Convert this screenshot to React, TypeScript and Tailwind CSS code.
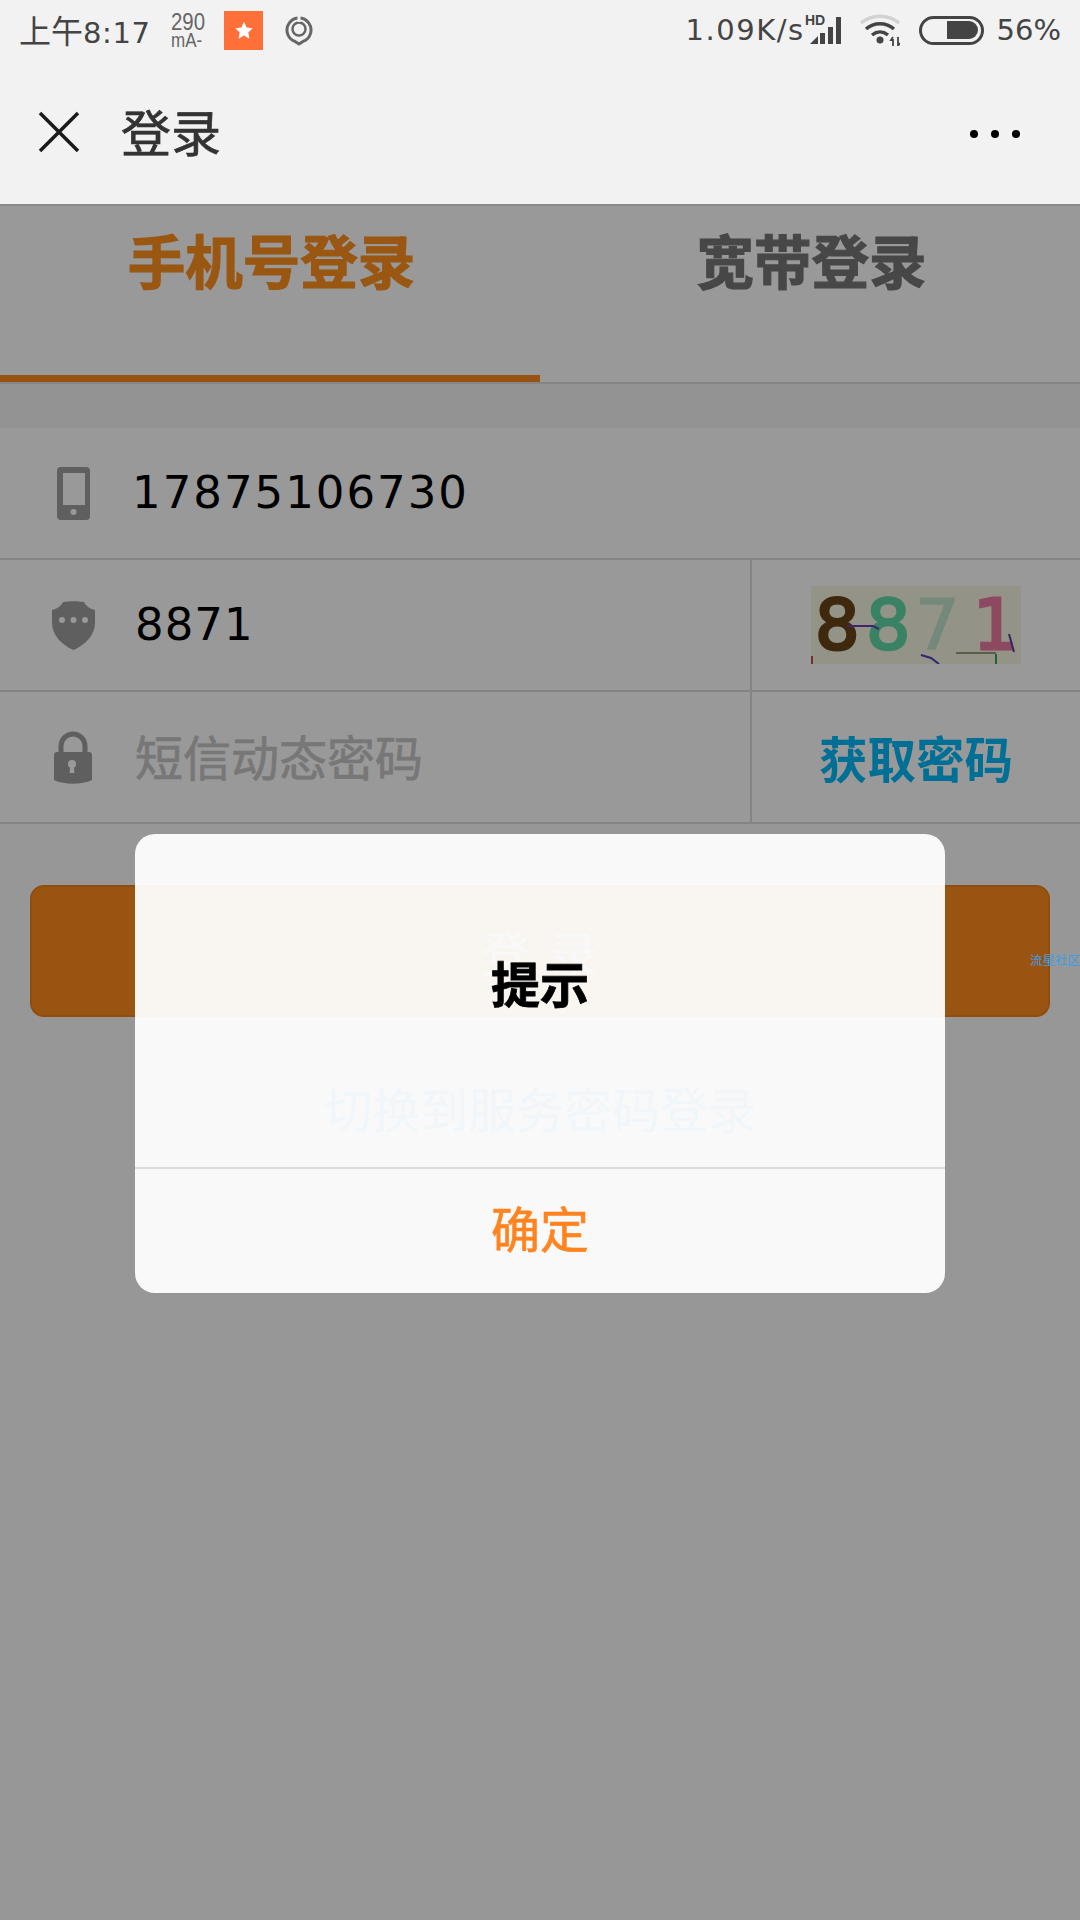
/* Status bar + title bar sit above the dialog overlay */
function StatusBar() {
  return (
    <div className="flex h-[60px] items-center justify-between pl-[19px] pr-[19px] text-[#444]">
      <div className="flex items-center">
        <span className="w-[132px] whitespace-nowrap text-[29px] leading-none tracking-[0.6px] font-['DejaVu_Sans','Noto_Sans_CJK_SC',sans-serif]">
          <span className="text-[32px] tracking-normal font-['Noto_Sans_CJK_SC',sans-serif]">上午</span>8:17
        </span>
        <div className="ml-[20px] flex w-[36px] flex-col font-['Liberation_Sans',sans-serif] text-[#666]">
          <span className="origin-left scale-x-[.85] text-[24px] leading-[20px]">290</span>
          <span className="origin-left scale-x-[.85] text-[20px] leading-[16px]">mA-</span>
        </div>
        <div className="ml-[17px] flex h-[39px] w-[39px] items-center justify-center bg-[#ff7038]">
          <svg width="20" height="19" viewBox="0 0 24 24" fill="#fff">
            <path d="M12 1l3.400 7.200 7.600 1-5.600 5.300 1.500 7.800L12 18.400l-6.900 3.900 1.500-7.800L1 9.200l7.600-1z" />
          </svg>
        </div>
        <svg className="ml-[22px]" width="28" height="32" viewBox="0 0 28 32" fill="none" stroke="#666">
          <path d="M14 30l-4-2.600A12 12 0 1 1 18 27.400z" strokeWidth="3" strokeLinejoin="round" />
          <circle cx="14" cy="15" r="6.500" strokeWidth="2.500" />
          <path d="M14 2v6" stroke="#f2f2f2" strokeWidth="3" />
        </svg>
      </div>
      <div className="flex items-center">
        <span className="text-[29px] leading-none tracking-[1.5px] font-['DejaVu_Sans',sans-serif]">1.09K/s</span>
        <svg width="36" height="32" viewBox="0 0 36 32" fill="#444" className="-mt-[2px]">
          <text x="0" y="12" fontSize="14" fontWeight="700" fontFamily="Liberation Sans">HD</text>
          <path d="M5 31l8-8v8zM15 20h5v11h-5zM23 14h5v17h-5zM31 4h5v27h-5z" />
        </svg>
        <svg className="ml-[19px]" width="40" height="32" viewBox="0 0 40 32" fill="none">
          <path d="M1 9c11-9 27-9 38 0" stroke="#d2d2d2" strokeWidth="3.500" />
          <path d="M6 15c8-7 20-7 28 0M12 21c5-4 11-4 16 0" stroke="#444" strokeWidth="3.500" />
          <circle cx="20" cy="26" r="3.500" fill="#444" />
          <path d="M33 23l-2 3h2v6M38 23v9l2-3" stroke="#444" strokeWidth="1.800" />
        </svg>
        <div className="ml-[19px] flex h-[29px] w-[65px] items-center justify-end rounded-full border-[3px] border-[#444] pr-[3px]">
          <div className="h-[18px] w-[31px] rounded-l-[2px] rounded-r-full bg-[#444]" />
        </div>
        <span className="ml-[13px] text-[29px] leading-none font-['DejaVu_Sans',sans-serif]">56%</span>
      </div>
    </div>
  );
}

function TitleBar() {
  return (
    <div className="flex h-[146px] items-center border-b-[2px] border-[#8a8a8a] bg-[#f2f2f2] pl-[38px] pr-[60px]">
      <svg width="42" height="42" viewBox="0 0 42 42" stroke="#1a1a1a" strokeWidth="3.500">
        <path d="M2 2l38 38M40 2L2 40" />
      </svg>
      <span className="-mt-[5px] ml-[41px] text-[50px] leading-none text-[#333] [-webkit-text-stroke:0.7px_#333]">登录</span>
      <div className="ml-auto mt-[3px] flex gap-[13px]">
        <div className="h-[8px] w-[8px] rounded-full bg-black" />
        <div className="h-[8px] w-[8px] rounded-full bg-black" />
        <div className="h-[8px] w-[8px] rounded-full bg-black" />
      </div>
    </div>
  );
}

function PhoneIcon() {
  return (
    <svg width="33" height="53" viewBox="0 0 33 53">
      <rect width="33" height="53" rx="4" fill="#9f9f9f" />
      <rect x="6" y="6" width="22" height="32" fill="#fff" />
      <circle cx="16.500" cy="45" r="3" fill="#fff" />
    </svg>
  );
}

function ShieldIcon() {
  return (
    <svg width="43" height="49" viewBox="0 0 43 49">
      <path d="M11 1c6-1 15-1 21 0 2 4 6 7 11 8v13c0 12-10 22-21.500 27C10 44 0 34 0 22V9c5-1 9-4 11-8z" fill="#9f9f9f" />
      <circle cx="10" cy="19" r="3" fill="#fff" />
      <circle cx="21.500" cy="19" r="3" fill="#fff" />
      <circle cx="33" cy="19" r="3" fill="#fff" />
    </svg>
  );
}

function LockIcon() {
  return (
    <svg width="38" height="53" viewBox="0 0 38 53">
      <path d="M7 24V15a12 12 0 0 1 24 0v9" fill="none" stroke="#9f9f9f" strokeWidth="5" />
      <path d="M3 21h32a3 3 0 0 1 3 3v25c-10 5-28 5-38 0V24a3 3 0 0 1 3-3z" fill="#9f9f9f" />
      <circle cx="18" cy="33" r="4" fill="#fff" />
      <path d="M16.500 33h3l1 9h-5z" fill="#fff" />
    </svg>
  );
}

function Captcha() {
  return (
    <div className="relative flex h-[78px] w-[210px] items-center bg-[#f6f7e2] pl-[4px] font-['DejaVu_Sans',sans-serif] text-[70px] leading-none">
      <span className="w-[51px] text-[#6a4518] [-webkit-text-stroke:3px_#6a4518]">8</span>
      <span className="w-[49px] text-[#5fd9a6] [-webkit-text-stroke:2.500px_#5fd9a6]">8</span>
      <span className="w-[58px] text-[#c3e4cd] [-webkit-text-stroke:1.500px_#c3e4cd]">7</span>
      <span className="text-[#ea7ba0] [-webkit-text-stroke:3px_#ea7ba0]">1</span>
      <svg className="absolute inset-0" width="210" height="78" fill="none" strokeWidth="2">
        <path d="M36 40l26 0 6 3" stroke="#6a3fb0" />
        <path d="M110 69l10 3 8 6" stroke="#5040c0" />
        <path d="M145 67h40" stroke="#9a9a80" />
        <path d="M198 48l5 18" stroke="#5040a0" />
        <path d="M185 68v10" stroke="#40a060" />
        <path d="M1 70v8" stroke="#c05050" />
      </svg>
    </div>
  );
}

function LoginForm() {
  return (
    <div className="h-full bg-[#fcfcfc]">
      <div className="grid h-[178px] grid-cols-2 border-b-[2px] border-[#dedede] bg-white">
        <div className="relative flex justify-center border-b-[7px] border-[#fd8a1f] pl-[3px] pt-[23px] text-[#ff911f]">
          <span className="text-[57.500px] leading-[60px] font-bold [-webkit-text-stroke:1.200px_#ff911f]">手机号登录</span>
        </div>
        <div className="flex justify-center pl-[3px] pt-[23px] text-[#777]">
          <span className="text-[57.500px] leading-[60px] font-bold [-webkit-text-stroke:1.200px_#777]">宽带登录</span>
        </div>
      </div>
      <div className="h-[44px] bg-[#f6f6f6]" />

      <div className="bg-white">
        <div className="flex h-[132px] items-center border-b-[2px] border-[#dcdcdc]">
          <div className="flex w-[145px] justify-center pl-[2px]"><PhoneIcon /></div>
          <span className="-ml-[13px] font-['DejaVu_Sans',sans-serif] text-[45px] tracking-[2px] text-black">17875106730</span>
        </div>
        <div className="flex h-[132px] items-center border-b-[2px] border-[#dcdcdc]">
          <div className="flex w-[145px] justify-center pl-[1px]"><ShieldIcon /></div>
          <span className="-ml-[10px] flex-1 font-['DejaVu_Sans',sans-serif] text-[45px] tracking-[1px] text-black">8871</span>
          <div className="flex h-full w-[330px] items-center justify-center border-l-[2px] border-[#dcdcdc]">
            <Captcha />
          </div>
        </div>
        <div className="flex h-[132px] items-center border-b-[2px] border-[#dcdcdc]">
          <div className="flex w-[145px] justify-center pl-[1px]"><LockIcon /></div>
          <span className="-mt-[4px] -ml-[10px] flex-1 text-[48px] leading-none text-[#c7c7c7] [-webkit-text-stroke:0.700px_#c7c7c7]">短信动态密码</span>
          <div className="flex h-full w-[330px] items-center justify-center border-l-[2px] border-[#dcdcdc]">
            <span className="text-[48.500px] leading-none font-bold text-[#00b9fa]">获取密码</span>
          </div>
        </div>
      </div>

      <div className="mx-[30px] mt-[61px] flex h-[132px] items-center justify-center rounded-[14px] border-[2px] border-[#f08218] bg-[#ff8d1e] pl-[20px]">
        <span className="text-[48px] leading-none tracking-[20px] text-white">登录</span>
      </div>
      <div className="mt-[66px] text-center text-[48px] leading-none text-[#00b9fa]">切换到服务密码登录</div>
    </div>
  );
}

export default function App() {
  return (
    <div className="relative flex h-[1920px] w-[1080px] flex-col overflow-hidden bg-[#f2f2f2] font-['Noto_Sans_CJK_SC',sans-serif]">
      <StatusBar />
      <TitleBar />
      <div className="relative flex-1">
        <LoginForm />
        {/* dim layer */}
        <div className="absolute inset-0 bg-black/40" />
        {/* alert */}
        <div className="absolute left-[135px] top-[628px] flex h-[459px] w-[810px] flex-col rounded-[20px] bg-white/[.94]">
          <div className="flex h-[335px] items-start justify-center border-b-[2px] border-[#dcdcdc] pt-[118px]">
            <span className="text-[49px] leading-[60px] font-bold text-black [-webkit-text-stroke:0.800px_#000]">提示</span>
          </div>
          <div className="flex flex-1 items-center justify-center pb-[10px]">
            <span className="text-[49px] leading-none text-[#ff8420] [-webkit-text-stroke:0.600px_#ff8420]">确定</span>
          </div>
        </div>
      </div>
      <span className="absolute left-[1030px] top-[954px] text-[12.500px] leading-none whitespace-nowrap text-[#3a9fe8]">流星社区</span>
    </div>
  );
}
